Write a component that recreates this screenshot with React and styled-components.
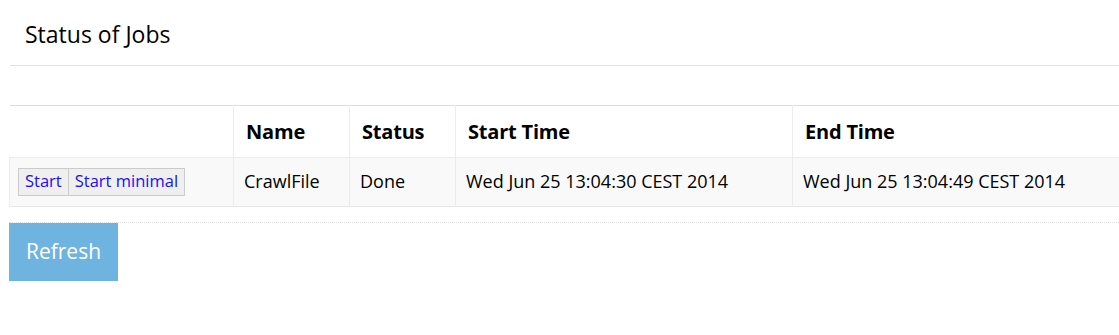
import React from "react";
import styled, { createGlobalStyle } from "styled-components";

const jobs = [
  {
    name: "CrawlFile",
    status: "Done",
    start: "Wed Jun 25 13:04:30 CEST 2014",
    end: "Wed Jun 25 13:04:49 CEST 2014",
  },
];

const App = () => {
  return (
    <>
      <GlobalStyle />
      <Page>
        <Header>
          <Titulo>Status of Jobs</Titulo>
        </Header>
        <Tabla>
          <colgroup>
            <col style={{ width: 224 }} />
            <col style={{ width: 116 }} />
            <col style={{ width: 106 }} />
            <col style={{ width: 337 }} />
            <col />
          </colgroup>
          <thead>
            <tr>
              <Th />
              <Th>Name</Th>
              <Th>Status</Th>
              <Th>Start Time</Th>
              <Th>End Time</Th>
            </tr>
          </thead>
          <tbody>
            {jobs.map((job) => (
              <Fila key={job.name}>
                <Td>
                  <Grupo>
                    <Boton>Start</Boton>
                    <Boton>Start minimal</Boton>
                  </Grupo>
                </Td>
                <Td>{job.name}</Td>
                <Td>{job.status}</Td>
                <Td>{job.start}</Td>
                <Td>{job.end}</Td>
              </Fila>
            ))}
          </tbody>
        </Tabla>
        <Acciones>
          <Refresh>Refresh</Refresh>
        </Acciones>
      </Page>
    </>
  );
};

const GlobalStyle = createGlobalStyle`
  body {
    margin: 0;
    background: #fff;
    font-family: "Open Sans", "Liberation Sans", sans-serif;
    color: #000;
    overflow: hidden;
  }
`;

const Page = styled.div`
  padding-left: 9px;
  width: 1140px;
`;

const Header = styled.header`
  height: 65px;
  display: flex;
  align-items: center;
  padding-left: 15px;
  margin-left: 1px;
  border-bottom: 1px solid #d6e4ef;
  margin-bottom: 39px;
`;

const Titulo = styled.h1`
  margin: 0;
  font-size: 23px;
  font-weight: 400;
  padding-top: 3px;
`;

const Tabla = styled.table`
  width: 100%;
  border-collapse: collapse;
  table-layout: fixed;
  border-top: 1px solid #c6e3f8;
  border-bottom: 1px solid #e6e6e6;
`;

const Th = styled.th`
  height: 51px;
  text-align: left;
  padding: 0 12px;
  font-size: 20px;
  font-weight: 700;
  letter-spacing: -0.2px;
  border-left: 1px solid #ececec;
  &:first-child {
    border-left: none;
  }
`;

const Fila = styled.tr`
  background: #f9f9f9;
  border-top: 1px solid #ececec;
`;

const Td = styled.td`
  height: 46px;
  padding: 0 10px 2px;
  font-size: 18px;
  line-height: 24px;
  border-left: 1px solid #ececec;
  &:first-child {
    border-left: 1px solid #ececec;
    padding: 0 8px;
  }
`;

const Grupo = styled.div`
  display: flex;
  width: fit-content;
  margin-top: -1px;
`;

const Boton = styled.button`
  font-family: "Open Sans", "Liberation Sans", sans-serif;
  font-size: 16.5px;
  line-height: 22px;
  color: #1a10f0;
  background: #efefef;
  border: 1px solid #cbcbcb;
  height: 28px;
  padding: 0 6px 1px;
  margin: 0;
  & + & {
    border-left: none;
    padding-left: 6px;
  }
`;

const Acciones = styled.div`
  margin-top: 15px;
  border-top: 1px dotted #e2e2e2;
`;

const Refresh = styled.button`
  font-family: "Open Sans", "Liberation Sans", sans-serif;
  font-size: 21px;
  color: #fff;
  background: #6fb3e0;
  border: none;
  width: 109px;
  height: 58px;
  padding: 0 0 2px;
`;

export default App;
